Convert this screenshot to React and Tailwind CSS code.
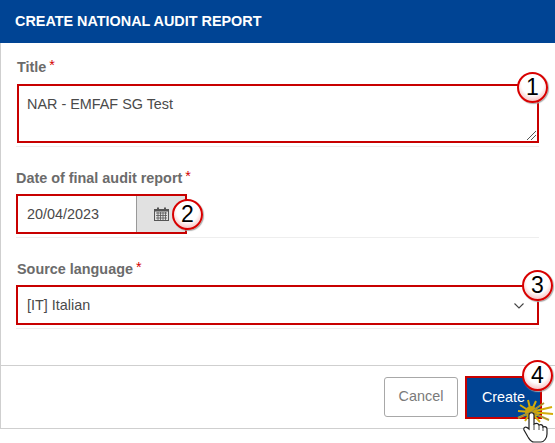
import React from "react";

const Marker = ({ n, className }) => (
  <div
    className={`absolute flex h-[31px] w-[31px] items-center justify-center rounded-full border-[2px] border-[#d80000] bg-[radial-gradient(circle_at_50%_38%,#ffffff_50%,#f09a9a_100%)] text-[23px] leading-none text-black shadow-[1px_1px_1px_#aaaaaa] ${className}`}
  >
    {n}
  </div>
);

const Label = ({ children, className }) => (
  <label className={`block text-[14.4px] font-bold leading-[18px] text-[#6b6b6b] ${className}`}>
    {children}
    <span className="relative top-[-2px] ml-[3px] font-normal text-[#d40000]">*</span>
  </label>
);

const Calendar = () => (
  <svg width="15" height="14" viewBox="0 0 15 14" className="text-[#555]">
    <rect x="0.5" y="2.5" width="14" height="11" fill="none" stroke="currentColor" />
    <rect x="0.5" y="2" width="14" height="2.5" fill="currentColor" />
    <rect x="3" y="0.5" width="2" height="3" fill="currentColor" />
    <rect x="10" y="0.5" width="2" height="3" fill="currentColor" />
    <path d="M2 6h11M2 8.500h11M2 11h11M4 5v8M6.500 5v8M9 5v8M11.500 5v8" stroke="currentColor" strokeWidth="0.8" fill="none" />
  </svg>
);

const Click = () => (
  <svg width="39" height="45" viewBox="0 0 39 45" className="absolute left-[516px] top-[398px]">
    <path
      d="M15 14L12 2M15 14L20 3M15 14L28 5M15 14L36 9M15 14L37 16M15 14L33 22M15 14L24 24M15 14L9 23M15 14L2 20M15 14L2 13M15 14L4 7"
      stroke="#d4ad0a"
      strokeWidth="2"
      fill="none"
    />
    <circle cx="15" cy="14" r="6" fill="#c9a30c" />
    <path d="M15 14L28 5M15 14L2 20M15 14L33 22" stroke="#7d7d6a" strokeWidth="0.800" fill="none" />
    <path
      d="M13 17c0-3 5-3 5 0v9c2-1 4-1 5 1 2-1 4 0 4 2 2-1 4 0 4 2v5c0 4-3 8-6 8h-7c-3 0-4-2-6-5l-4-7c-1-3 2-4 5-1z"
      fill="#fff"
      stroke="#222"
      strokeWidth="1.200"
    />
    <path d="M18 26v6M23 27v5M27 29v4" stroke="#222" strokeWidth="0.800" fill="none" />
  </svg>
);

export default function App() {
  return (
    <div className="relative h-[443px] w-[555px] overflow-hidden bg-white font-['Liberation_Sans',Arial,sans-serif]">
      <div className="flex h-[43px] items-center bg-[#004494] pl-[15px] text-[14.4px] font-bold text-white">
        CREATE NATIONAL AUDIT REPORT
      </div>

      <div className="flex h-[386px] flex-col border-b border-l border-[#cfcfcf]">
        <div className="flex-1 pl-[15px] pr-[15px]">
          <Label className="ml-px mt-[15px]">Title</Label>
          <div className="mt-[8px] w-[523px] border-b border-[#eeeeee] pb-[3px]">
            <div className="relative ml-px h-[59px] w-[522px] border-[2px] border-[#c80000] px-[8px] pt-[9px] text-[14.4px] leading-[18px] text-[#4a4a4a]">
              NAR - EMFAF SG Test
              <svg width="10" height="10" viewBox="0 0 10 10" className="absolute bottom-[1px] right-[1px]">
                <path d="M1 10L10 1M5 10l5-5" stroke="#555" strokeWidth="1" fill="none" />
              </svg>
            </div>
          </div>

          <Label className="mt-[22px]">Date of final audit report</Label>
          <div className="mt-[7px] w-[523px] border-b border-[#eeeeee] pb-[3px]">
            <div className="flex h-[40px] w-[171px] border-[2px] border-[#c80000] text-[14.4px] text-[#4a4a4a]">
              <div className="flex w-[119px] items-center border-r border-[#999999] pl-[9px] pt-px">20/04/2023</div>
              <div className="flex flex-1 items-center bg-[#e1e1e1] pl-[17px]">
                <Calendar />
              </div>
            </div>
          </div>

          <Label className="ml-px mt-[22px]">Source language</Label>
          <div className="mt-[7px] w-[523px] border-b border-[#eeeeee] pb-[3px]">
            <div className="flex h-[40px] items-center justify-between border-[2px] border-[#c80000] pl-[9px] pr-[13px] pt-px text-[14.4px] text-[#4a4a4a]">
              [IT] Italian
              <svg width="10" height="6" viewBox="0 0 10 6">
                <path d="M0.500 0.500L5 5l4.500-4.500" stroke="#444" strokeWidth="1.100" fill="none" />
              </svg>
            </div>
          </div>
        </div>

        <div className="flex h-[63px] shrink-0 items-start justify-end gap-[7px] border-t border-[#cfcfcf] pr-[13px] pt-[10px]">
          <button className="mt-[1px] h-[40px] w-[74px] rounded-[3px] border border-[#a8a8a8] bg-white text-[14.4px] text-[#7a7a7a]">
            Cancel
          </button>
          <button className="h-[43px] w-[77px] border-[2px] border-[#c80000] bg-[#004494] text-[14.4px] text-white">
            Create
          </button>
        </div>
      </div>

      <Marker n="1" className="left-[517px] top-[72px]" />
      <Marker n="2" className="left-[172px] top-[199px]" />
      <Marker n="3" className="left-[522px] top-[270px]" />
      <Marker n="4" className="left-[522px] top-[360px]" />
      <Click />
    </div>
  );
}
